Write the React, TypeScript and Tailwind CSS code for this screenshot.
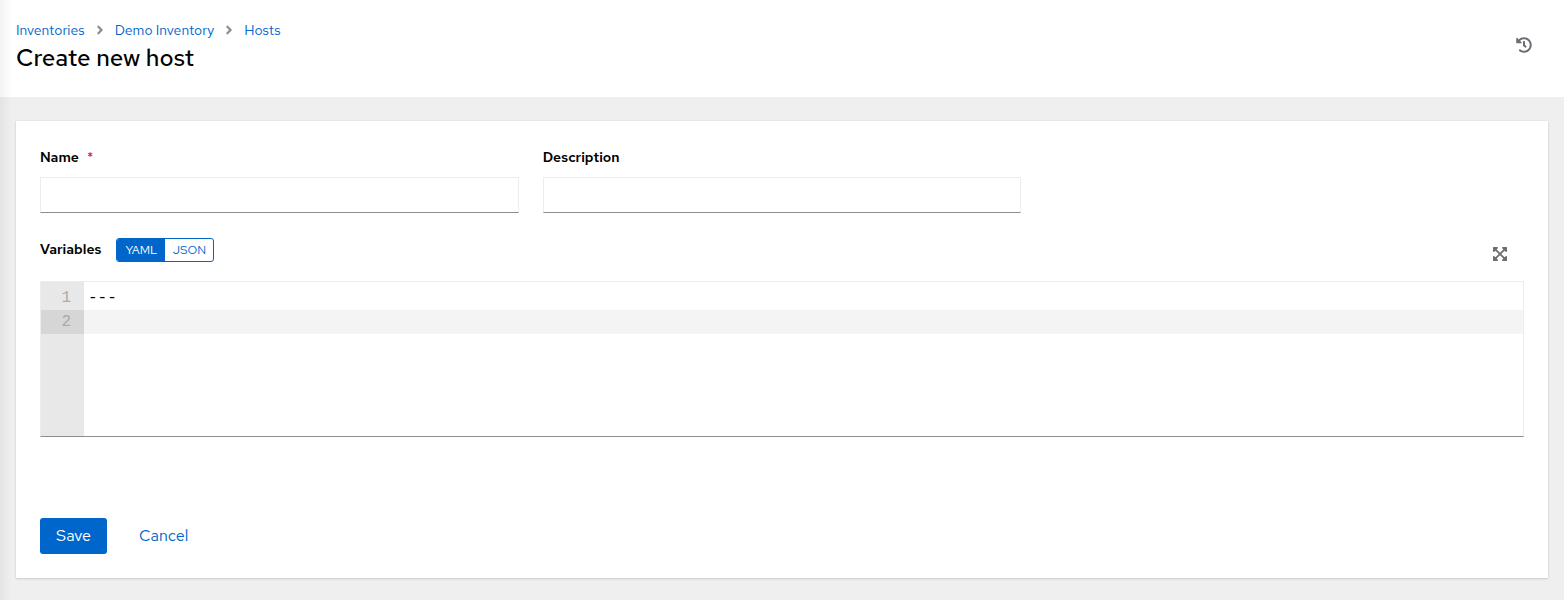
import { useState } from 'react';
import { FaAngleRight, FaExpandArrowsAlt, FaHistory } from 'react-icons/fa';

type Mode = 'yaml' | 'json';

const crumbs = ['Inventories', 'Demo Inventory'];

function VariablesEditor({ value, onChange }: { value: string; onChange: (value: string) => void }) {
  const lines = value.split('\n');
  const [activeLine, setActiveLine] = useState(lines.length - 1);

  const trackCaret = (el: HTMLTextAreaElement) => {
    setActiveLine(el.value.slice(0, el.selectionStart).split('\n').length - 1);
  };

  return (
    <div className="flex min-h-39 border border-[#ededed] border-b-[#8a8d90] font-['Liberation_Mono',monospace] text-base leading-6">
      <div className="w-[43px] bg-[#e8e8e8] pt-1 text-right text-[#aaaaaa]">
        {lines.map((_, i) => (
          <div key={i} className={i === activeLine ? 'bg-[#d6d6d6] pr-[13px]' : 'pr-[13px]'}>
            {i + 1}
          </div>
        ))}
      </div>
      <div className="relative flex-1 pt-1">
        {lines.map((_, i) => (
          <div key={i} className={i === activeLine ? 'h-6 bg-[#f4f4f4]' : 'h-6'} />
        ))}
        <textarea
          id="variables"
          value={value}
          spellCheck={false}
          onChange={(e) => {
            onChange(e.target.value);
            trackCaret(e.target);
          }}
          onSelect={(e) => trackCaret(e.currentTarget)}
          className="absolute inset-0 h-full w-full resize-none overflow-hidden bg-transparent px-1 pt-1 text-black outline-none"
        />
      </div>
    </div>
  );
}

export default function App() {
  const [name, setName] = useState('');
  const [description, setDescription] = useState('');
  const [mode, setMode] = useState<Mode>('yaml');
  const [variables, setVariables] = useState('---\n');

  const switchMode = (next: Mode) => {
    setMode(next);
    setVariables(next === 'yaml' ? '---\n' : '{}');
  };

  const inputClass =
    'h-9 w-full border border-[#ededed] border-b-[#8a8d90] bg-white px-2 text-base outline-none focus:border-b-[#0066cc]';

  return (
    <div className="relative min-h-screen bg-[#efefef] font-['Red_Hat_Text',Inter,sans-serif] text-[#151515]">
      {/* Header */}
      <header className="flex items-start justify-between bg-white px-4 pt-5 pb-5">
        <div>
          <nav aria-label="Breadcrumb" className="flex items-center text-sm leading-5">
            {crumbs.map((crumb) => (
              <div key={crumb} className="flex items-center">
                <a href="#" className="text-[#0066cc] hover:underline">{crumb}</a>
                <FaAngleRight className="mx-2 h-3.5 w-3.5 text-[#8a8d90]" />
              </div>
            ))}
            <a href="#" className="text-[#0066cc] hover:underline">Hosts</a>
          </nav>
          <h1 className="pb-[1px] text-2xl leading-9 font-medium text-black">
            Create new host
          </h1>
        </div>
        <button type="button" aria-label="View activity stream" className="mt-[9px] px-4 py-2 text-[#6a6e73]">
          <FaHistory className="h-4 w-4" />
        </button>
      </header>

      <main className="px-4 py-6">
        <form
          onSubmit={(e) => e.preventDefault()}
          className="bg-white p-6 shadow-[0_1px_2px_rgba(3,3,3,0.12),0_0_2px_rgba(3,3,3,0.08)]"
        >
          <div className="grid grid-cols-3 gap-6">
            <div>
              <label htmlFor="name" className="mb-2 flex gap-2 text-sm leading-6 font-semibold text-black">
                Name <span className="font-normal text-[#c9190b]">*</span>
              </label>
              <input id="name" type="text" required value={name} onChange={(e) => setName(e.target.value)} className={inputClass} />
            </div>
            <div>
              <label htmlFor="description" className="mb-2 flex text-sm leading-6 font-semibold text-black">
                Description
              </label>
              <input
                id="description"
                type="text"
                value={description}
                onChange={(e) => setDescription(e.target.value)}
                className={inputClass}
              />
            </div>
          </div>

          {/* Variables */}
          <div className="mt-[25px] mb-[11px] flex items-start justify-between">
            <div className="flex items-start gap-[15px]">
              <label htmlFor="variables" className="text-sm leading-[22px] font-semibold text-black">Variables</label>
              <div className="flex h-6 overflow-hidden rounded-[3px] border border-[#0066cc] text-xs">
                <button
                  type="button"
                  onClick={() => switchMode('yaml')}
                  className={mode === 'yaml' ? 'w-12 bg-[#0066cc] text-white' : 'w-12 text-[#0066cc]'}
                >
                  YAML
                </button>
                <button
                  type="button"
                  onClick={() => switchMode('json')}
                  className={mode === 'json' ? 'w-12 bg-[#0066cc] text-white' : 'w-12 text-[#0066cc]'}
                >
                  JSON
                </button>
              </div>
            </div>
            <button type="button" aria-label="Expand input" className="px-4 py-2 text-[#6a6e73]">
              <FaExpandArrowsAlt className="h-4 w-4" />
            </button>
          </div>
          <VariablesEditor value={variables} onChange={setVariables} />

          {/* Actions */}
          <div className="mt-[81px] flex gap-4 text-base">
            <button type="submit" className="h-9 rounded-[3px] bg-[#0066cc] px-4 text-white">Save</button>
            <button type="button" className="h-9 px-4 text-[#0066cc]">Cancel</button>
          </div>
        </form>
      </main>

      {/* Shadow cast by the sidebar */}
      <div className="pointer-events-none absolute inset-y-0 left-0 w-3 bg-linear-to-r from-black/5 to-transparent" />
    </div>
  );
}
